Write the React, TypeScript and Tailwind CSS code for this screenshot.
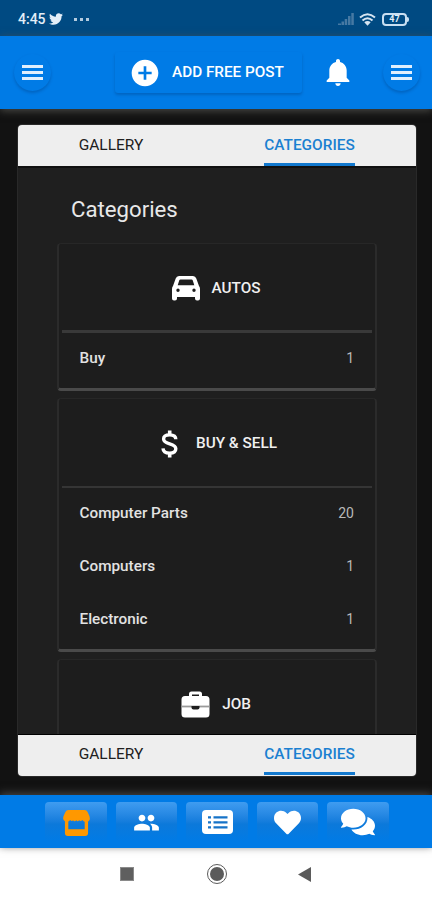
import type { ReactNode } from "react";
import { FaComments, FaHeart, FaTwitter } from "react-icons/fa";
import { IoMdNotifications } from "react-icons/io";
import { MdAddCircle, MdPeople } from "react-icons/md";

interface CategoryItem {
  name: string;
  count: number;
}

interface CategoryCardProps {
  title: string;
  icon: ReactNode;
  items: CategoryItem[];
  headClass: string;
  cardClass: string;
  textClass: string;
}

function StatusBar() {
  return (
    <div className="flex h-9 shrink-0 items-center bg-[#004a82] pt-[2px] pl-[18px] pr-[21px] text-[#e3eef8]">
      <span className="w-[31px] text-[14px] font-medium leading-none">4:45</span>
      <FaTwitter className="h-[14px] w-[14px]" />
      <div className="ml-[11px] flex gap-[3px]">
        <span className="h-[3px] w-[3px] bg-[#b3cbdf]" />
        <span className="h-[3px] w-[3px] bg-[#b3cbdf]" />
        <span className="h-[3px] w-[3px] bg-[#b3cbdf]" />
      </div>
      <svg className="ml-auto h-3 w-4" viewBox="0 0 16 12" fill="#4679a3">
        <path d="M0 12V10.500h3V12zM3.500 12V8.500h2.500V12zM6.700 12V6h2.500v6zM10 12V3h2.500v9zM13.300 12V0h2.500v12z" />
      </svg>
      <svg className="ml-[5px] h-[13px] w-[17px]" viewBox="0 0 17 13" fill="none" stroke="#d6e5f2" strokeWidth="2">
        <path d="M1 4.500Q8.500-2 16 4.500M3.500 7.500Q8.500 3 13.500 7.500" />
        <path d="M5.300 9.300Q8.500 6.800 11.700 9.300L8.500 12.800z" fill="#d6e5f2" stroke="none" />
      </svg>
      <div className="ml-[6px] flex items-center pr-[2px]">
        <div className="flex h-[13px] w-[25px] items-center justify-center rounded-[4px] border-2 border-[#c9dff2] text-[9px] font-bold leading-none">
          47
        </div>
        <span className="h-[5px] w-[2px] rounded-r bg-[#c9dff2]" />
      </div>
    </div>
  );
}

function MenuButton() {
  return (
    <button
      type="button"
      className="flex h-[37px] w-[37px] items-center justify-center rounded-full shadow-[0_2px_3px_rgba(0,50,110,0.3)]"
    >
      <span className="flex w-[21px] flex-col gap-[3px]">
        <span className="h-[3px] bg-[#e0effd]" />
        <span className="h-[3px] bg-[#e0effd]" />
        <span className="h-[3px] bg-[#e0effd]" />
      </span>
    </button>
  );
}

function Header() {
  return (
    <header className="z-10 flex h-[73px] shrink-0 items-center bg-[#007be6] pl-[14px] pr-[12px] shadow-[0_2px_8px_rgba(80,80,75,0.9)]">
      <MenuButton />
      <button
        type="button"
        className="ml-[64px] flex h-[41px] w-[187px] items-center rounded-[3px] pl-[14px] text-white shadow-[0_2px_3px_rgba(0,50,110,0.3)]"
      >
        <MdAddCircle className="h-8 w-8" />
        <span className="ml-[11px] whitespace-nowrap text-[15.300px] font-medium">ADD FREE POST</span>
      </button>
      <IoMdNotifications className="ml-[19px] h-[33px] w-[34px] text-white" />
      <div className="ml-auto">
        <MenuButton />
      </div>
    </header>
  );
}

function Tabs({ bottom = false }: { bottom?: boolean }) {
  return (
    <div
      className={
        bottom
          ? "flex h-[42px] shrink-0 rounded-b-[4px] border-t border-black bg-[#eee] text-[15.500px] leading-[38px]"
          : "flex h-[41px] shrink-0 rounded-t-[4px] bg-[#eee] pt-px text-[15.500px] leading-[38px]"
      }
    >
      <div className="flex w-[186px] justify-center">
        <span className="text-[#202020]">GALLERY</span>
      </div>
      <div className="flex w-[211px] justify-center">
        <span className="h-[40px] border-b-3 border-[#1178ce] text-[15.400px] font-medium text-[#1b80d1]">
          CATEGORIES
        </span>
      </div>
    </div>
  );
}

function CategoryCard({ title, icon, items, headClass, cardClass, textClass }: CategoryCardProps) {
  return (
    <section
      className={`mx-auto w-[320px] shrink-0 rounded-[4px] border-x-2 border-t border-b-3 border-x-[#2b2b2b] border-t-[#272727] border-b-[#4a4a4a] bg-[#1d1d1d] px-[3px] ${cardClass}`}
    >
      <div className={`flex h-[89px] items-center justify-center pt-[2px] text-white ${headClass}`}>
        {icon}
        <h2 className={`text-[15.300px] font-medium text-[#f0f0f0] ${textClass}`}>{title}</h2>
      </div>
      {items.map((item) => (
        <div
          key={item.name}
          className="flex h-[53px] items-center justify-between pr-[18px] pb-[2px] pl-[17.500px] text-[#e2e2e2]"
        >
          <span className="text-[15.300px] font-medium">{item.name}</span>
          <span className="text-[14px] text-[#b8b8b8]">{item.count}</span>
        </div>
      ))}
    </section>
  );
}

function CarIcon() {
  return (
    <svg className="h-[25px] w-[28px]" viewBox="0 0 28 25" fill="currentColor">
      <path
        fillRule="evenodd"
        d="M7 0H21Q23.500 0 24.300 2.500L27 10Q28 11 28 13V22.500Q28 24.500 26 24.500H25Q23 24.500 23 22.500V21H5V22.500Q5 24.500 3 24.500H2Q0 24.500 0 22.500V13Q0 11 1 10L3.700 2.500Q4.500 0 7 0ZM8.500 3.500Q7.500 3.500 7.200 4.500L5.700 9.300H22.300L20.800 4.500Q20.500 3.500 19.500 3.500ZM6 12.500A1.700 1.700 0 1 0 6 15.900A1.700 1.700 0 1 0 6 12.500ZM22 12.500A1.700 1.700 0 1 0 22 15.900A1.700 1.700 0 1 0 22 12.500Z"
      />
    </svg>
  );
}

function DollarIcon() {
  return (
    <svg className="h-[28px] w-[17px]" viewBox="0 0 17 28" fill="none" stroke="currentColor">
      <path
        d="M14.800 9.300C14.800 6.500 12.500 4.900 8.700 4.900C4.900 4.900 2.600 6.500 2.600 9C2.600 11.700 5 12.800 8.700 13.800C12.500 14.800 14.800 16.100 14.800 18.800C14.800 21.500 12.400 23.100 8.700 23.100C4.700 23.100 2.200 21.300 2 18.300"
        strokeWidth="3.400"
      />
      <path d="M8.700 .5V5M8.700 23V27.500" strokeWidth="3.600" />
    </svg>
  );
}

function BriefcaseIcon() {
  return (
    <svg className="h-[27px] w-[29px]" viewBox="0 0 29 27" fill="currentColor">
      <path
        fillRule="evenodd"
        d="M8 5V3Q8 .5 10.500 .5H18.500Q21 .5 21 3V5H25Q28.500 5 28.500 8.500V23Q28.500 26.500 25 26.500H4Q.5 26.500 .5 23V8.500Q.5 5 4 5ZM11 5H18V3.500H11Z"
      />
      <path d="M.5 15.500H28.500" stroke="#9a9a9a" strokeWidth="1.800" />
      <path d="M10.500 15H18.500V16.500Q18.500 18.500 16.500 18.500H12.500Q10.500 18.500 10.500 16.500Z" fill="#1d1d1d" />
    </svg>
  );
}

function StoreIcon() {
  return (
    <svg className="h-[27px] w-[29px]" viewBox="0 0 29 28" fill="#ff9800">
      <path d="M6 1H23Q25 1 26 3L28 7.500Q29.500 13 24.500 13.500Q22 13.500 20.500 11.500Q19 13.500 17.200 11.700Q15.500 13.800 14.500 11.700Q12 13.800 11 11.700Q9.500 13.500 8 11.500Q6.500 13.500 4 13.200Q-.5 12 1 7.500L3 3Q4 1 6 1Z" />
      <path
        fillRule="evenodd"
        d="M2.500 12H6V21H23V12H26.500V25Q26.500 28 23.500 28H5.500Q2.500 28 2.500 25Z"
      />
    </svg>
  );
}

function ListIcon() {
  return (
    <svg className="h-[24px] w-[31px]" viewBox="0 0 31 24">
      <rect width="31" height="24" rx="4" fill="#fff" />
      <path d="M6 7.300H9M6 12.300H9M6 17.300H9M11.500 7.300H25.500M11.500 12.300H25.500M11.500 17.300H25.500" stroke="#1673c8" strokeWidth="2.200" />
    </svg>
  );
}

function BottomNav() {
  const buttons = [
    { id: "store", icon: <StoreIcon /> },
    { id: "people", icon: <MdPeople className="h-[27px] w-[27px]" /> },
    { id: "list", icon: <ListIcon /> },
    { id: "favorites", icon: <FaHeart className="h-[27px] w-[27px]" /> },
    { id: "chat", icon: <FaComments className="h-[34px] w-[34px]" /> },
  ];

  return (
    <nav className="z-10 flex h-[53px] shrink-0 justify-center gap-[9px] bg-[#007be6] pt-[7px] pl-[2px] shadow-[0_-2px_8px_rgba(75,75,75,0.9)]">
      {buttons.map((button) => (
        <button
          key={button.id}
          type="button"
          className="flex h-[40px] w-[61.500px] items-center justify-center rounded-[4px] bg-linear-to-b from-[#3f9cf0] from-0% via-[#0c79da] via-55% to-[#007be6] to-100% text-white"
        >
          {button.icon}
        </button>
      ))}
    </nav>
  );
}

function SystemNav() {
  return (
    <div className="flex h-[52px] shrink-0 items-center bg-white pl-[120px]">
      <span className="h-[14px] w-[14px] border border-[#8a8a8a] bg-[#5f5f5f]" />
      <span className="ml-[73px] flex h-[20px] w-[20px] items-center justify-center rounded-full border-[1.500px] border-[#5b5b5b]">
        <span className="h-[14px] w-[14px] rounded-full bg-[#5b5b5b]" />
      </span>
      <svg className="ml-[71px] h-[15px] w-[13px]" viewBox="0 0 13 15" fill="#5b5b5b">
        <path d="M0 7.500L13 0V15Z" />
      </svg>
    </div>
  );
}

export default function App() {
  return (
    <div className="flex h-[900px] w-[432px] flex-col overflow-hidden bg-[#121212] font-['Roboto',sans-serif]">
      <StatusBar />
      <Header />
      <main className="flex min-h-0 flex-1 pt-4 pr-4 pb-[19px] pl-[18px]">
        <div className="flex w-[398px] flex-col rounded-[4px] bg-[#1f1f1f] shadow-[0_0_0_1px_#292929]">
          <Tabs />
          <div className="flex min-h-0 flex-1 flex-col overflow-hidden border-t-2 border-[#101010]">
            <h1 className="mt-[25px] ml-[53px] shrink-0 text-[22.200px] leading-[32px] text-[#e8e8e8]">Categories</h1>
            <CategoryCard
              title="AUTOS"
              icon={<CarIcon />}
              items={[{ name: "Buy", count: 1 }]}
              headClass="border-b-3 border-[#393939] pr-[2px]"
              cardClass="mt-[18px] h-[148px]"
              textClass="ml-[12px]"
            />
            <CategoryCard
              title="BUY & SELL"
              icon={<DollarIcon />}
              items={[
                { name: "Computer Parts", count: 20 },
                { name: "Computers", count: 1 },
                { name: "Electronic", count: 1 },
              ]}
              headClass="border-b-2 border-[#353535] pl-[4px]"
              cardClass="mt-[7px] h-[254px]"
              textClass="ml-[18px]"
            />
            <CategoryCard
              title="JOB"
              icon={<BriefcaseIcon />}
              items={[]}
              headClass="border-b-2 border-[#353535] pr-[2px]"
              cardClass="mt-[7px] h-[150px]"
              textClass="ml-[12px]"
            />
          </div>
          <Tabs bottom />
        </div>
      </main>
      <BottomNav />
      <SystemNav />
    </div>
  );
}
